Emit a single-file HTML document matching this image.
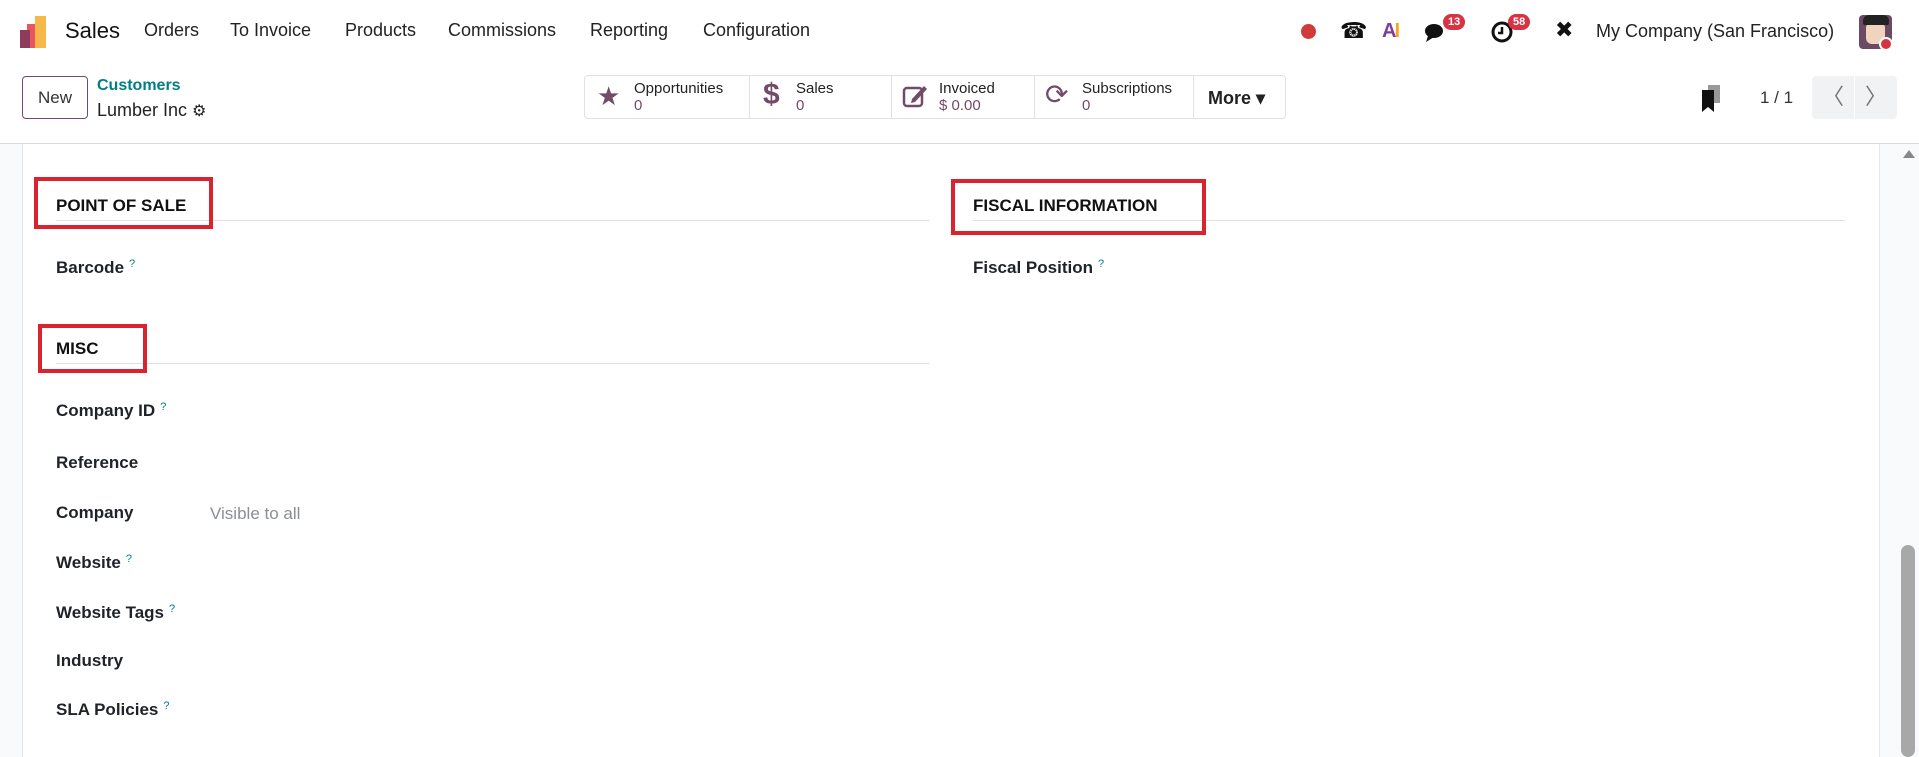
<!DOCTYPE html>
<html><head><style>
*{box-sizing:border-box;margin:0;padding:0}
body{width:1919px;height:757px;overflow:hidden;background:#fff;font-family:"Liberation Sans",sans-serif;color:#222;position:relative}
.a{position:absolute;white-space:nowrap}
.nav{font-size:18px;color:#222;top:20px}
.lbl{font-weight:bold;font-size:17px;color:#1f2328;left:56px}
.q{color:#017e84;font-size:11px;vertical-align:top;margin-left:5px;font-weight:normal}
.hd{font-weight:bold;font-size:17px;color:#111}
.rbox{position:absolute;border:4px solid #d9232e}
.hr{position:absolute;height:1px;background:#dee2e6}
.badge{position:absolute;background:#d63343;color:#fff;font-size:11px;border-radius:10px;padding:2px 5px;font-weight:bold}
.stat{position:absolute;top:76px;height:43px;font-size:15px;color:#222;line-height:17px}
.stat b{font-weight:normal;color:#714b67;display:block}
</style></head><body>
<!-- top nav -->
<svg class="a" style="left:20px;top:16px" width="30" height="32" viewBox="0 0 30 32"><rect x="0" y="14" width="10" height="18" fill="#8f3b5c"/><rect x="7" y="8" width="10" height="24" fill="#e9545f"/><rect x="15" y="0" width="11" height="32" fill="#f7b84b"/><rect x="0" y="14" width="10" height="18" fill="#8f3b5c"/></svg>
<div class="a" style="left:65px;top:18px;font-size:22px;color:#111">Sales</div>
<div class="a nav" style="left:144px">Orders</div>
<div class="a nav" style="left:230px">To Invoice</div>
<div class="a nav" style="left:345px">Products</div>
<div class="a nav" style="left:448px">Commissions</div>
<div class="a nav" style="left:590px">Reporting</div>
<div class="a nav" style="left:703px">Configuration</div>
<div class="a" style="left:1301px;top:24px;width:15px;height:15px;border-radius:50%;background:#d13a3a"></div>
<div class="a" style="left:1340px;top:18px;font-size:22px;color:#111">☎</div>
<div class="a" style="left:1382px;top:20px;font-size:20px;font-weight:bold;color:#7c3fa0;letter-spacing:-2px">A<span style="color:#f5a623">I</span></div>
<svg class="a" style="left:1424px;top:22px" width="24" height="22" viewBox="0 0 24 22"><ellipse cx="10" cy="9" rx="9" ry="7" fill="#111"/><path d="M4 14 L2 20 L10 15Z" fill="#111"/></svg>
<div class="badge" style="left:1443px;top:14px">13</div>
<svg class="a" style="left:1490px;top:20px" width="24" height="24" viewBox="0 0 24 24"><circle cx="12" cy="12" r="9" fill="none" stroke="#111" stroke-width="3"/><path d="M12 7v6h-4" stroke="#111" stroke-width="2.5" fill="none"/></svg>
<div class="badge" style="left:1508px;top:14px">58</div>
<div class="a" style="left:1555px;top:17px;font-size:22px;color:#111">✖</div>
<div class="a" style="left:1596px;top:21px;font-size:18px;color:#222">My Company (San Francisco)</div>
<div class="a" style="left:1859px;top:15px;width:33px;height:34px;border-radius:4px;background:#6d4a63"></div>
<div class="a" style="left:1866px;top:22px;width:19px;height:22px;border-radius:6px;background:#f2d3bd"></div>
<div class="a" style="left:1863px;top:15px;width:26px;height:10px;border-radius:6px 6px 2px 2px;background:#222"></div>
<div class="a" style="left:1879px;top:37px;width:14px;height:14px;border-radius:50%;background:#d63343;border:2px solid #fff"></div>
<!-- control panel -->
<div class="a" style="left:22px;top:76px;width:66px;height:43px;border:1px solid #714b67;border-radius:4px;font-size:17px;color:#333;text-align:center;line-height:41px">New</div>
<div class="a" style="left:97px;top:77px;font-size:16px;font-weight:bold;color:#017e84">Customers</div>
<div class="a" style="left:97px;top:100px;font-size:18px;color:#222">Lumber Inc <span style="font-size:16px">⚙</span></div>
<div class="a" style="left:584px;top:75px;width:702px;height:44px;border:1px solid #dee2e6;border-radius:4px"></div>
<div class="a" style="left:749px;top:75px;width:1px;height:44px;background:#dee2e6"></div>
<div class="a" style="left:891px;top:75px;width:1px;height:44px;background:#dee2e6"></div>
<div class="a" style="left:1034px;top:75px;width:1px;height:44px;background:#dee2e6"></div>
<div class="a" style="left:1193px;top:75px;width:1px;height:44px;background:#dee2e6"></div>
<div class="a" style="left:597px;top:81px;font-size:26px;color:#714b67">★</div>
<div class="stat" style="left:634px;top:80px">Opportunities<b>0</b></div>
<div class="a" style="left:763px;top:78px;font-size:30px;font-weight:bold;color:#714b67">$</div>
<div class="stat" style="left:796px;top:80px">Sales<b>0</b></div>
<svg class="a" style="left:902px;top:83px" width="28" height="26" viewBox="0 0 28 26"><rect x="2" y="5" width="18" height="18" rx="3" fill="none" stroke="#714b67" stroke-width="2.5"/><path d="M10 16 L22 3 L25 6 L13 19 L9 20Z" fill="#714b67"/></svg>
<div class="stat" style="left:939px;top:80px">Invoiced<b>$ 0.00</b></div>
<div class="a" style="left:1045px;top:78px;font-size:28px;color:#714b67">⟳</div>
<div class="stat" style="left:1082px;top:80px">Subscriptions<b>0</b></div>
<div class="a" style="left:1208px;top:88px;font-size:18px;font-weight:bold;color:#222">More ▾</div>
<svg class="a" style="left:1700px;top:85px" width="24" height="28" viewBox="0 0 24 28"><rect x="8" y="0" width="12" height="18" fill="#999"/><path d="M2 5h12v22l-6-5-6 5z" fill="#111"/></svg>
<div class="a" style="left:1760px;top:88px;font-size:17px;color:#333">1 / 1</div>
<div class="a" style="left:1812px;top:76px;width:42px;height:43px;background:#f1f2f4;border-radius:4px 0 0 4px;color:#777;font-size:22px;text-align:center;line-height:41px">〈</div>
<div class="a" style="left:1855px;top:76px;width:42px;height:43px;background:#f1f2f4;border-radius:0 4px 4px 0;color:#777;font-size:22px;text-align:center;line-height:41px">〉</div>
<div class="a" style="left:0;top:143px;width:1919px;height:1px;background:#d8dadd"></div>
<!-- content -->
<div class="a" style="left:0;top:144px;width:23px;height:613px;background:#f9fafb;border-right:1px solid #e5e7ea"></div>
<div class="a" style="left:1879px;top:144px;width:40px;height:613px;background:#f9fafb;border-left:1px solid #e5e7ea"></div>
<div class="a" style="left:1903px;top:150px;width:0;height:0;border-left:6px solid transparent;border-right:6px solid transparent;border-bottom:8px solid #888"></div>
<div class="a" style="left:1901px;top:545px;width:14px;height:212px;background:#a8a8a8;border-radius:7px"></div>

<div class="hr" style="left:56px;top:220px;width:874px"></div>
<div class="hr" style="left:973px;top:220px;width:872px"></div>
<div class="hr" style="left:56px;top:363px;width:874px"></div>
<div class="a hd" style="left:56px;top:196px">POINT OF SALE</div>
<div class="rbox" style="left:34px;top:177px;width:179px;height:52px"></div>
<div class="a hd" style="left:973px;top:196px">FISCAL INFORMATION</div>
<div class="rbox" style="left:951px;top:179px;width:255px;height:56px"></div>
<div class="a hd" style="left:56px;top:339px">MISC</div>
<div class="rbox" style="left:38px;top:324px;width:109px;height:49px"></div>

<div class="a lbl" style="top:258px">Barcode<span class="q">?</span></div>
<div class="a lbl" style="left:973px;top:258px">Fiscal Position<span class="q">?</span></div>
<div class="a lbl" style="top:401px">Company ID<span class="q">?</span></div>
<div class="a lbl" style="top:453px">Reference</div>
<div class="a lbl" style="top:503px">Company</div>
<div class="a" style="left:210px;top:504px;font-size:17px;color:#8a8f94">Visible to all</div>
<div class="a lbl" style="top:553px">Website<span class="q">?</span></div>
<div class="a lbl" style="top:603px">Website Tags<span class="q">?</span></div>
<div class="a lbl" style="top:651px">Industry</div>
<div class="a lbl" style="top:700px">SLA Policies<span class="q">?</span></div>
</body></html>
